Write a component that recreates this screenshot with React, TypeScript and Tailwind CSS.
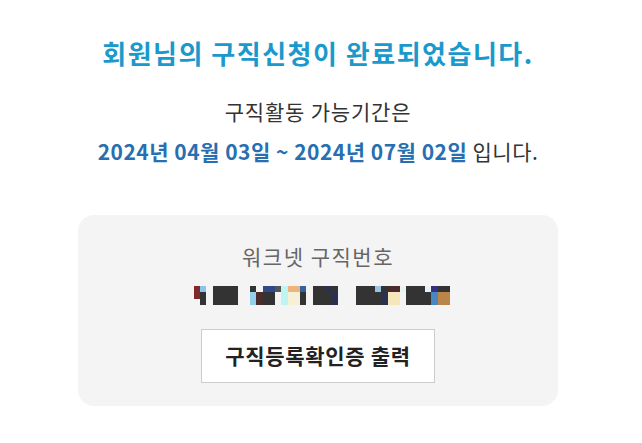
import React from "react";

const C: Record<string, string> = {
  d: "#333333",
  b: "#f4f4f4",
  r: "#7f2a2a",
  l1: "#8cc3ec",
  l2: "#94d0ee",
  br: "#4a2c2c",
  nv: "#2e4a88",
  g: "#555555",
  cy: "#c0f4f0",
  or: "#eeb47c",
  cr: "#f6f0d6",
  bl: "#3264a2",
  nd: "#2c3050",
  l3: "#96c8e6",
  cr2: "#f6e6bc",
  v1: "#e8f4f4",
  v2: "#e8f0f8",
  in: "#35307f",
  bl2: "#4a86c0",
  tn: "#bb854a",
};

const cols: string[][] = [
  ["r", "r", "b"],
  ["l1", "d", "d"],
  ["b", "b", "b"],
  ["d", "d", "d"],
  ["d", "d", "d"],
  ["d", "d", "d"],
  ["d", "d", "d"],
  ["b", "b", "b"],
  ["b", "b", "b"],
  ["d", "l2", "l2"],
  ["b", "br", "br"],
  ["nv", "d", "d"],
  ["nv", "d", "d"],
  ["g", "b", "b"],
  ["cy", "cy", "cy"],
  ["or", "cr", "cr"],
  ["or", "cr", "cr"],
  ["bl", "d", "d"],
  ["b", "b", "b"],
  ["d", "d", "d"],
  ["d", "d", "d"],
  ["nd", "d", "d"],
  ["d", "nd", "nd"],
  ["b", "b", "b"],
  ["b", "b", "b"],
  ["b", "b", "b"],
  ["d", "d", "d"],
  ["d", "d", "d"],
  ["d", "d", "d"],
  ["l3", "d", "d"],
  ["d", "nd", "nd"],
  ["br", "cr2", "cr2"],
  ["br", "cr2", "cr2"],
  ["v1", "b", "b"],
  ["d", "d", "d"],
  ["d", "d", "d"],
  ["d", "d", "d"],
  ["v2", "d", "d"],
  ["in", "bl2", "bl2"],
  ["d", "tn", "tn"],
  ["d", "tn", "tn"],
];

function Mosaic() {
  return (
    <svg
      width="256"
      height="19"
      viewBox="0 0 41 3"
      preserveAspectRatio="none"
      shapeRendering="crispEdges"
      className="ml-2 block"
    >
      {cols.map((col, x) =>
        col.map((k, y) => (
          <rect key={`${x}-${y}`} x={x} y={y} width={1.02} height={1.02} fill={C[k]} />
        ))
      )}
    </svg>
  );
}

export default function App() {
  return (
    <div
      className="w-[642px] h-[443px] bg-white overflow-hidden"
      style={{ fontFamily: '"Noto Sans CJK KR", "Noto Sans", sans-serif' }}
    >
      <div className="w-[636px] flex flex-col items-center pt-[36px]">
        <h1 className="text-[26px] leading-[34px] font-bold tracking-[1.5px] text-[#1a99cc]">
          회원님의 구직신청이 완료되었습니다.
        </h1>
        <p className="mt-[21px] text-[21px] leading-[40px] tracking-[0.8px] text-[#333333]">구직활동 가능기간은</p>
        <p className="text-[21px] leading-[40px] tracking-[0.5px] text-[#333333]">
          <span className="font-bold text-[#276fb0]">2024년 04월 03일 ~ 2024년 07월 02일</span> 입니다.
        </p>
        <div className="mt-[44px] w-[480px] h-[191px] rounded-[16px] bg-[#f4f4f4] flex flex-col items-center pt-[26px]">
          <p className="text-[21px] leading-[30px] tracking-[1.5px] text-[#666666]">워크넷 구직번호</p>
          <div className="mt-[15px]">
            <Mosaic />
          </div>
          <button className="mt-[24px] w-[234px] h-[54px] bg-white border border-[#cccccc] text-[21px] tracking-[0.7px] font-bold text-[#222222]">
            구직등록확인증 출력
          </button>
        </div>
      </div>
    </div>
  );
}
